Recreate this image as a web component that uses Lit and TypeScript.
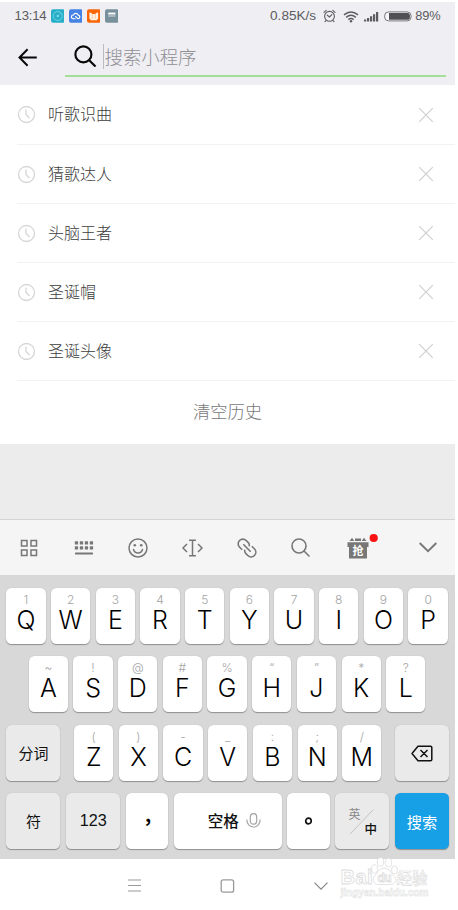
import { LitElement, html, css, svg, nothing } from "lit";
import { customElement, property } from "lit/decorators.js";

const HISTORY = ["听歌识曲", "猜歌达人", "头脑王者", "圣诞帽", "圣诞头像"];

type Key = [string, string];
const ROW_1: Key[] = [["1", "Q"], ["2", "W"], ["3", "E"], ["4", "R"], ["5", "T"], ["6", "Y"], ["7", "U"], ["8", "I"], ["9", "O"], ["0", "P"]];
const ROW_2: Key[] = [["~", "A"], ["!", "S"], ["@", "D"], ["#", "F"], ["%", "G"], ["“", "H"], ["”", "J"], ["*", "K"], ["?", "L"]];
const ROW_3: Key[] = [["(", "Z"], [")", "X"], ["-", "C"], ["_", "V"], [":", "B"], [";", "N"], ["/", "M"]];

@customElement("status-bar")
class StatusBar extends LitElement {
  static styles = css`
    :host { display: flex; align-items: center; height: 28px; padding: 0 14.5px 0 14.5px; color: #5c5c60;
      font: 13.2px/28px "Liberation Sans", sans-serif; }
    .time { width: 36.3px; letter-spacing: -0.2px; }
    .speed { margin-left: auto; font-size: 13.6px; }
    svg { display: block; flex: none; }
    .app { margin-right: 4.4px; }
    .alarm { margin-left: 6.5px; }
    .wifi { margin-left: 7px; }
    .signal { margin-left: 5.5px; }
    .battery { margin: 0 3.5px 0 4.5px; }
    .level { font-size: 12.8px; letter-spacing: -0.1px; }
  `;
  render() {
    return html`
      <span class="time">13:14</span>
      <svg class="app" width="13.6" height="14" viewBox="0 0 14 14"><rect width="14" height="14" rx="2" fill="#27afc9"/><circle cx="7" cy="7" r="4.6" fill="none" stroke="#8be0e8" stroke-width=".7"/><circle cx="7" cy="7" r="1" fill="#a9ecf0"/><path d="M7 7 10 4" stroke="#7ad6e0" stroke-width=".6"/></svg>
      <svg class="app" width="13.6" height="14" viewBox="0 0 14 14"><rect width="14" height="14" rx="2" fill="#4682e4"/><path d="M6.300 9.800H4.300A1.900 1.900 0 0 1 4.500 6 2.700 2.700 0 0 1 9.500 6.100 1.900 1.900 0 0 1 9.800 9.800C8.200 9.800 8 8 6.800 7.600" fill="none" stroke="#fff" stroke-width="1.200" stroke-linecap="round"/></svg>
      <svg class="app" width="13.6" height="14" viewBox="0 0 14 14"><rect width="14" height="14" rx="2" fill="#fb6607"/><path d="M2.500 3.300Q5 3.200 5.500 5h3Q9 3.200 11.500 3.300V9.500L10 11.300H4L2.500 9.500Z" fill="#fff3e6"/><path d="M5.500 5v5M8.500 5v5" stroke="#fbb080" stroke-width=".6"/></svg>
      <svg class="app" width="13.6" height="14" viewBox="0 0 14 14"><rect width="14" height="14" rx="2" fill="#78909c"/><rect x="3.300" y="3.500" width="7.400" height="2" fill="#fff"/><rect x="3.300" y="5.500" width="7.400" height="2.500" fill="#a9b8c0"/></svg>
      <span class="speed">0.85K/s</span>
      <svg class="alarm" width="13" height="14" viewBox="0 0 13 14" fill="none" stroke="#5c5c60" stroke-width="1.100" stroke-linecap="round"><circle cx="6.500" cy="7.300" r="4.900"/><path d="M4.300 6.200 6.500 8 8.800 5.600M1 3.300 3.200 1.300M12 3.300 9.800 1.300M3 11.500l-1 1.200M10 11.500l1 1.200"/></svg>
      <svg class="wifi" width="16" height="13" viewBox="0 0 16 13" fill="none" stroke="#5c5c60" stroke-width="1.500"><path d="M1 4.800Q8-.8 15 4.800M3.200 7.300Q8 3.300 12.800 7.300M5.400 9.600Q8 7.500 10.600 9.600"/><circle cx="8" cy="11.200" r="1.200" fill="#5c5c60" stroke="none"/></svg>
      <svg class="signal" width="15" height="12" viewBox="0 0 15 12" fill="#5c5c60"><path d="M0 9.500h2.200V11.500H0zM3 8h2.200v3.500H3zM6 6.200h2.200v5.300H6zM9 4.200h2.200V11.500H9zM12 2h2.200v9.500h-2.200z"/></svg>
      <svg class="battery" width="28" height="11" viewBox="0 0 28 11"><rect x=".6" y=".9" width="26.500" height="9" rx="4" fill="#f7f7fa" stroke="#77777b"/><path d="M5 2H23.500Q26 2 26 5.400T23.500 8.800H5Z" fill="#505054"/></svg>
      <span class="level">89%</span>`;
  }
}

@customElement("search-bar")
class SearchBar extends LitElement {
  static styles = css`
    :host { display: flex; height: 55px; box-sizing: border-box; padding: 0 9.300px 0 18px; }
    .back { display: block; margin-top: 18px; }
    .field { display: flex; align-items: center; flex: 1; margin-left: 28px; height: 47px; box-sizing: border-box;
      padding: 7px 0 0 9.300px; border-bottom: 2px solid #a4de98; }
    .caret { width: 1px; height: 25px; background: #bbbbc0; margin-left: 6.700px; }
    .hint { font: 300 18.400px/28px "Noto Sans CJK SC", sans-serif; color: #909095; }
  `;
  render() {
    return html`
      <svg class="back" width="19" height="19" viewBox="0 0 19 19" fill="none" stroke="#080808" stroke-width="2"><path d="M18.800 9.500H2M9.600 1.200 1.500 9.500 9.600 17.800"/></svg>
      <div class="field">
        <svg width="22.500" height="22.500" viewBox="0 0 23 23" fill="none" stroke="#080808" stroke-width="2.200"><circle cx="9.600" cy="9.600" r="8.200"/><path d="M15.500 15.500 22 22"/></svg>
        <i class="caret"></i><span class="hint">搜索小程序</span>
      </div>`;
  }
}

@customElement("history-list")
class HistoryList extends LitElement {
  static styles = css`
    :host { display: block; background: #fff; height: 359px; box-sizing: border-box; padding-top: 0.900px; }
    .row { display: flex; align-items: center; height: 59.100px; box-sizing: border-box; margin-left: 17px;
      padding: 0 21px 0 0; border-bottom: 1px solid #f2f2f2; }
    .name { flex: 1; margin: 0 0 3px 12px; font: 300 16px/24px "Noto Sans CJK SC", sans-serif; color: #3c3c3c; }
    .clear { text-align: center; font: 300 17.300px/60px "Noto Sans CJK SC", sans-serif; color: #777; }
  `;
  render() {
    return html`
      ${HISTORY.map((name) => html`
        <div class="row">
          <svg width="19" height="19" viewBox="0 0 19 19" fill="none" stroke="#d6d6d6" stroke-width="1.300"><circle cx="9.500" cy="9.500" r="8"/><path d="M9 4.500V9.500L12.500 13"/></svg>
          <span class="name">${name}</span>
          <svg width="16" height="16" viewBox="0 0 16 16" stroke="#cfcfcf" stroke-width="1.200"><path d="M1.200 1.200 14.800 14.800M14.800 1.200 1.200 14.800"/></svg>
        </div>`)}
      <div class="clear">清空历史</div>`;
  }
}

@customElement("tool-bar")
class ToolBar extends LitElement {
  static styles = css`
    :host { display: flex; height: 56px; box-sizing: border-box; border-top: 1px solid #d4d4d4; background: #f5f5f5; padding-left: 2.350px; }
    .tool { flex: none; width: 54.300px; display: flex; align-items: center; justify-content: center; }
    .gift { width: 60px; }
    .fold { margin-left: auto; width: 54px; }
    svg { display: block; overflow: visible; }
    .glyph { font: 700 11px "Noto Sans CJK SC", sans-serif; }
  `;
  render() {
    return html`
      <div class="tool"><svg width="18" height="18" viewBox="0 0 18 18" fill="none" stroke="#777" stroke-width="1.500"><path d="M1.500 1.500h5.500v5.500H1.500zM11 1.500h5.500v5.500H11zM1.500 11h5.500v5.500H1.500zM11 11h5.500v5.500H11z"/></svg></div>
      <div class="tool"><svg width="18" height="14" viewBox="0 0 18 14" fill="#777">${[0, 5, 10, 15].map((x) => svg`<rect x=${x - 0.2} y="0.300" width="3.300" height="3.300" rx=".5"/><rect x=${x - 0.2} y="5.300" width="3.300" height="3.300" rx=".5"/>`)}<rect y="11.500" width="18" height="2" rx=".6"/></svg></div>
      <div class="tool"><svg width="20" height="20" viewBox="0 0 20 20" fill="none" stroke="#777" stroke-width="1.500" stroke-linecap="round"><circle cx="10" cy="10" r="9"/><path d="M5.500 11.500Q6.500 15 10 15T14.500 11.500"/><g fill="#777" stroke="none"><circle cx="6.800" cy="7.200" r="1.300"/><circle cx="13.200" cy="7.200" r="1.300"/></g></svg></div>
      <div class="tool"><svg width="21" height="18" viewBox="0 0 21 18" fill="none" stroke="#777" stroke-width="1.500"><path d="M7 1.200h7M7 16.800h7M10.500 1.200V16.800M5 5 1 9 5 13M16 5l4 4-4 4"/></svg></div>
      <div class="tool"><svg width="20" height="20" viewBox="0 0 20 20" fill="none" stroke="#777" stroke-width="1.600" stroke-linecap="round"><path d="M4.700 11.300 2.600 9.200A4.700 4.700 0 0 1 9.200 2.500L11.300 4.600Q12.500 6 12.300 7.600M15.300 8.700l2.100 2.100A4.700 4.700 0 0 1 10.800 17.500L8.700 15.400Q7.500 14 7.700 12.400M6.800 6.800l6.400 6.400"/></svg></div>
      <div class="tool"><svg width="19" height="19" viewBox="0 0 19 19" fill="none" stroke="#777" stroke-width="1.600" stroke-linecap="round"><circle cx="8" cy="8" r="7"/><path d="M13 13l5 5"/></svg></div>
      <div class="tool gift"><svg width="22" height="22" viewBox="0 0 22 22"><path d="M0.500 5.200H21.500V10H20V21.500H2V10H.5ZM8 1.500h6v2.500H8ZM2.500 4 5 .8 7.300 4ZM14.700 4 17 .8 19.500 4Z" fill="#777"/><text class="glyph" x="11" y="17.800" text-anchor="middle" fill="#fff">抢</text><circle cx="26.700" cy="1" r="4.100" fill="#fb1111"/></svg></div>
      <div class="tool fold"><svg width="18" height="11" viewBox="0 0 18 11" fill="none" stroke="#777" stroke-width="1.900"><path d="M.7 1 9 9.200 17.300 1"/></svg></div>`;
  }
}

@customElement("key-cap")
class KeyCap extends LitElement {
  @property() hint = "";
  @property() label = "";
  static styles = css`
    :host { display: flex; flex-direction: column; align-items: center; width: 39.300px; height: 56px; box-sizing: border-box;
      padding-top: 4px; border-radius: 5.500px; background: #fff; box-shadow: 0 1px 1px #909090, 0 0 1px #b5b5b5; }
    .hint { font: 300 12px/16px Inter, sans-serif; color: #a4a4a4; height: 16px; }
    .label { font: 300 25px/24px Inter, sans-serif; color: #000; }
  `;
  render() {
    return html`<span class="hint">${this.hint || nothing}</span><span class="label">${this.label}</span>`;
  }
}

@customElement("key-board")
class KeyBoard extends LitElement {
  static styles = css`
    :host { display: flex; flex-direction: column; gap: 12.500px; height: 283.500px; box-sizing: border-box; padding: 12.800px 5.800px 0 6.300px; background: #d8d8d8; }
    .row { display: flex; gap: 5.400px; height: 56px; }
    .inset { padding-left: 22.400px; }
    .key { display: flex; align-items: center; justify-content: center; box-sizing: border-box; height: 56px; border-radius: 5.500px;
      background: #fff; box-shadow: 0 1px 1px #909090, 0 0 1px #b5b5b5; font: 500 15px/20px "Noto Sans CJK SC", sans-serif; color: #111; }
    .soft { background: #eaeaea; font-weight: 400; width: 54.200px; }
    .split { margin-right: 8.200px; }
    .erase { margin-left: auto; padding-top: 2px; }
    .num { font: 16.200px "Liberation Sans", sans-serif; padding-bottom: 1px; }
    .punct { width: 42.300px; }
    .space { flex: 1; padding: 0 0 2px 13px; font-size: 15.500px; gap: 7px; }
    .go { width: 54.300px; background: #18a0e6; color: #fff; font-weight: 400; font-size: 15.200px; padding-bottom: 1px; }
    .last { gap: 5.600px; }
    .bold { font: 500 12.500px "Noto Sans CJK SC", sans-serif; }
    .thin { font: 400 12px "Noto Sans CJK SC", sans-serif; }
    .comma { font: 700 19px "Noto Sans CJK SC", sans-serif; }
    svg { display: block; }
  `;
  keys(row: Key[]) {
    return row.map(([hint, label]) => html`<key-cap .hint=${hint} .label=${label}></key-cap>`);
  }
  render() {
    return html`
      <div class="row">${this.keys(ROW_1)}</div>
      <div class="row inset">${this.keys(ROW_2)}</div>
      <div class="row"><div class="key soft split">分词</div>${this.keys(ROW_3)}
        <div class="key soft erase"><svg width="22" height="17" viewBox="0 0 22 17" fill="none" stroke="#111" stroke-width="1.500" stroke-linejoin="round"><path d="M7 1.200H19.500Q20.800 1.200 20.800 2.500V14.500Q20.800 15.800 19.500 15.800H7L1 8.500ZM9.500 5l7 7M16.500 5l-7 7"/></svg></div></div>
      <div class="row last">
        <div class="key soft">符</div>
        <div class="key soft num">123</div>
        <div class="key punct"><svg width="42" height="56" viewBox="0 0 42 56"><text class="comma" x="19" y="29">,</text></svg></div>
        <div class="key space">空格<svg width="15" height="15" viewBox="0 0 15 15" fill="none" stroke="#a5a5a5" stroke-width="1.200"><rect x="4.300" y=".7" width="6.400" height="10.500" rx="3.200"/><path d="M.8 6.500C.8 16.500 14.200 16.500 14.200 6.500"/></svg></div>
        <div class="key punct"><svg width="8" height="8" viewBox="0 0 8 8" fill="none" stroke="#111" stroke-width="1.700"><circle cx="4.500" cy="4" r="2.800"/></svg></div>
        <div class="key soft"><svg width="54" height="56" viewBox="0 0 54 56"><path d="M15 41 38.500 16.500" stroke="#c4c4c4"/><text class="thin" x="13.500" y="25.500" fill="#888">英</text><text class="bold" x="29.500" y="41" fill="#111">中</text></svg></div>
        <div class="key go">搜索</div>
      </div>`;
  }
}

@customElement("nav-bar")
class NavBar extends LitElement {
  static styles = css`
    :host { display: flex; position: relative; align-items: center; height: 51.500px; padding-left: 127.500px; background: #fff; box-sizing: border-box; }
    svg { display: block; margin-top: 3px; }
    .home { margin-left: 79px; }
    .down { margin-left: 79px; }
    .mark { position: absolute; left: 338px; top: -5px; margin: 0; }
    .brand { font: 700 20px "Liberation Sans", sans-serif; }
    .du { font: 700 12px "Liberation Sans", sans-serif; }
    .cn { font: 500 15.500px "Noto Sans CJK SC", sans-serif; }
    .site { font: 700 10.800px "Liberation Sans", sans-serif; }
  `;
  render() {
    return html`
      <svg width="13" height="13" viewBox="0 0 13 13" stroke="#999" stroke-width="1.100"><path d="M0 1H13M0 6.500H13M0 12H13"/></svg>
      <svg class="home" width="15" height="14" viewBox="0 0 15 14" fill="none" stroke="#999" stroke-width="1.300"><rect x="1.200" y=".8" width="12.400" height="12.400" rx="2"/></svg>
      <svg class="down" width="14" height="8" viewBox="0 0 14 8" fill="none" stroke="#888" stroke-width="1.200"><path d="M.5 .7 7 7.200 13.500 .7"/></svg>
      <svg class="mark" width="96" height="46" viewBox="0 0 96 46" fill="#fff" stroke="#dcdcdc" stroke-width=".8">
        <text class="brand" x="2.500" y="30" textLength="32">Bai</text>
        <ellipse cx="36.500" cy="15" rx="3" ry="4.200"/><ellipse cx="42.500" cy="8" rx="3.200" ry="4.300"/><ellipse cx="50.500" cy="8.500" rx="3.200" ry="4.300"/><ellipse cx="56.500" cy="16" rx="3" ry="4"/>
        <path d="M46 14C40 15 40 19 36.500 22 33.500 26 36 31 41 30.500H52C57 31 59.500 26 56.500 22.500 53 19 52 15 46 14Z"/>
        <text class="du" x="39.500" y="28" textLength="14">du</text>
        <text class="cn" x="58.500" y="29.500" textLength="31" stroke-width=".6">经验</text>
        <text class="site" x="2.500" y="42" textLength="88" lengthAdjust="spacingAndGlyphs" stroke="#e2e2e2" stroke-width=".6">jingyan.baidu.com</text>
      </svg>`;
  }
}

@customElement("app-root")
class AppRoot extends LitElement {
  static styles = css`
    :host { display: flex; flex-direction: column; width: 455px; height: 910px; box-sizing: border-box; padding-top: 2px; background: #fff; }
    .head { background: #efeef3; height: 83px; }
    .blank { height: 75px; background: #ececec; }
  `;
  render() {
    return html`
      <div class="head"><status-bar></status-bar><search-bar></search-bar></div>
      <history-list></history-list>
      <div class="blank"></div>
      <tool-bar></tool-bar>
      <key-board></key-board>
      <nav-bar></nav-bar>`;
  }
}
